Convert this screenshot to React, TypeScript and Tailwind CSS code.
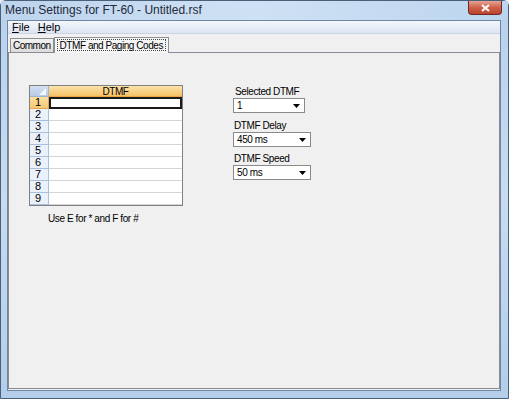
import React from "react";

const font = { fontFamily: '"Liberation Sans", Arial, sans-serif' };

function Dropdown({ value, width }: { value: string; width: string }) {
  return (
    <div
      className={`${width} h-[15px] bg-white border border-[#8a8a8a] flex items-center pl-[3px] pr-[4px] text-[10px] leading-none text-black`}
    >
      <span className="flex-1">{value}</span>
      <svg width="7" height="4" viewBox="0 0 7 4">
        <path d="M0 0 H7 L3.5 4 Z" fill="#000" />
      </svg>
    </div>
  );
}

export default function App() {
  const rows = [1, 2, 3, 4, 5, 6, 7, 8, 9];
  return (
    <div style={font} className="w-[509px] h-[399px] overflow-hidden bg-[#f0f0f0]">
      <div className="w-[509px] h-[399px] rounded-t-[6px] border border-[#4a5f78] bg-gradient-to-b from-[#b9d1ec] via-[#c8dbf1] to-[#b3cdea] flex flex-col">
        {/* Title bar */}
        <div className="h-[19px] flex items-start pl-[4px] pr-[6px] bg-gradient-to-r from-[#bdd4ee] via-[#cfe1f4] to-[#bcd5ef]">
          <div className="pt-[2px] text-[12px] leading-[15px] text-[#1e2a3a]">
            Menu Settings for FT-60 - Untitled.rsf
          </div>
          <div className="ml-auto w-[34px] h-[14px] rounded-b-[4px] border border-t-0 border-[#6e2a22] bg-gradient-to-b from-[#e6a394] via-[#d0614c] to-[#b9422f] flex items-center justify-center">
            <svg width="9" height="8" viewBox="0 0 9 8">
              <path d="M1 1 L8 7 M8 1 L1 7" stroke="#fff" strokeWidth="2" />
            </svg>
          </div>
        </div>
        {/* Client area */}
        <div className="flex-1 ml-[6px] mr-[7px] mb-[7px] border border-[#6c86a4] bg-[#f0f0f0] flex flex-col">
          {/* Menu bar */}
          <div className="h-[13px] bg-gradient-to-b from-[#f4f7fc] to-[#dde5f2] border-b border-[#c9d4e6] flex items-center text-[11px] leading-none text-black">
            <span className="ml-[4px]"><u>F</u>ile</span>
            <span className="ml-[8px]"><u>H</u>elp</span>
          </div>
          <div className="flex-1 flex flex-col tracking-[-0.4px]">
            {/* Tabs */}
            <div className="flex items-end h-[18px] pl-[2px]">
              <div className="h-[14px] px-[2px] border border-b-0 border-[#8e8f8f] bg-gradient-to-b from-[#f2f2f2] to-[#dcdcdc] text-[10px] leading-[13px] tracking-[-0.5px] text-black">
                Common
              </div>
              <div className="h-[16px] -mb-[1px] px-[2px] pt-[1px] border border-b-0 border-[#8e8f8f] bg-[#f5f5f5] text-[10px] leading-none text-black relative z-10">
                <div className="border border-dotted border-[#444] px-[2px] h-[12px] leading-[11px] tracking-[-0.45px]">
                  DTMF and Paging Codes
                </div>
              </div>
            </div>
            {/* Panel */}
            <div className="flex-1 mb-[1px] border border-[#898c95] bg-[#f0f0f0] flex pl-[20px] pt-[32px]">
              {/* Grid column */}
              <div className="flex flex-col w-[154px]">
                <div className="border border-[#808080] bg-white flex flex-col">
                  <div className="flex h-[11px]">
                    <div className="w-[19px] bg-gradient-to-b from-[#d3e1f3] to-[#b6cbe6] border-r border-b border-[#9db6d4] relative">
                      <svg className="absolute right-[2px] bottom-[1px]" width="7" height="7" viewBox="0 0 7 7">
                        <path d="M7 0 V7 H0 Z" fill="#f4f8fd" />
                      </svg>
                    </div>
                    <div className="flex-1 bg-gradient-to-b from-[#fbe2a9] to-[#f5c264] border-b border-[#e8a53f] text-[10px] leading-[11px] text-center text-black">
                      DTMF
                    </div>
                  </div>
                  {rows.map((r) => (
                    <div key={r} className="flex h-[12px]">
                      <div
                        className={`w-[19px] text-[11px] leading-[11px] pl-[5px] border-r border-b ${
                          r === 1
                            ? "bg-gradient-to-b from-[#fbe0a3] to-[#f6c872] border-[#e0a64c]"
                            : "bg-[#eaf1fa] border-[#a9c0dc]"
                        } text-black`}
                      >
                        {r}
                      </div>
                      <div
                        className={`flex-1 ${
                          r === 1 ? "border-2 border-[#1a1a1a]" : "border-b border-[#d5d5d5]"
                        }`}
                      />
                    </div>
                  ))}
                </div>
                <div className="mt-[7px] pl-[19px] text-[10px] leading-[12px] text-black">
                  Use E for * and F for #
                </div>
              </div>
              {/* Right column */}
              <div className="ml-[50px] pt-[2px] flex flex-col text-[10px] leading-none text-black">
                <div className="pl-[2px] h-[11px]">Selected DTMF</div>
                <Dropdown value="1" width="w-[72px]" />
                <div className="mt-[8px] pl-[1px] h-[11px]">DTMF Delay</div>
                <Dropdown value="450 ms" width="w-[78px]" />
                <div className="mt-[7px] pl-[1px] h-[11px]">DTMF Speed</div>
                <Dropdown value="50 ms" width="w-[78px]" />
              </div>
            </div>
          </div>
        </div>
      </div>
    </div>
  );
}
